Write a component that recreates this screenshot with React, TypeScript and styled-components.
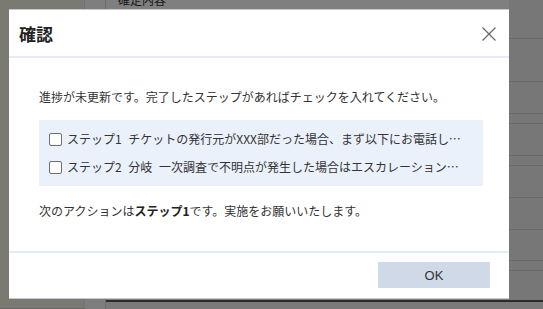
import React, { useState } from "react"
import styled, { createGlobalStyle } from "styled-components"

const GlobalStyle = createGlobalStyle`
  html, body {
    margin: 0;
    padding: 0;
    width: 543px;
    height: 309px;
    overflow: hidden;
    font-family: "Noto Sans CJK JP", "Noto Sans", sans-serif;
    color: #333;
  }
`;

// the page behind the modal
const Page = styled.div`
    position: relative;
    width: 543px;
    height: 309px;
    display: grid;
    grid-template-columns: 85px 21px 1fr 34px;
    grid-template-rows: 1fr 9px;
    background: #ffffff;
`;

const SideBar = styled.div`
    background: #f6f4e4;
    border-right: 1px solid #e2e2e2;
    border-bottom: 1px solid #cfcfcf;
    grid-row: 1 / 3;
`;

const Gutter = styled.div`
    background: #fdfdfd;
    border-right: 1px solid #d8d8d8;
    grid-row: 1 / 3;
`;

const Content = styled.div`
    padding: 0 12px;
    font-size: 12px;
    line-height: 1;
    color: #333;
    margin-top: -6px;
`;

const RightColumn = styled.div`
    background: #eeeeee;
    display: flex;
    flex-direction: column;
`;

const RightRow = styled.div<{ $h: number }>`
    height: ${(p) => p.$h}px;
    border-bottom: 1px solid #d2d2d2;
    flex-shrink: 0;
`;

const BottomBar = styled.div`
    grid-column: 3 / 5;
    background: #f4f4f4;
    border-top: 2px solid #555;
`;

const Overlay = styled.div`
    position: absolute;
    inset: 0;
    background: rgba(0, 0, 0, 0.5);
    padding: 10px 34px 11px 9px;
    box-sizing: border-box;
`;

const Dialog = styled.div`
    width: 500px;
    height: 288px;
    background: #fff;
    display: flex;
    flex-direction: column;
    box-shadow: 0 -1px 0 #c8c8c8, 0 1px 0 #c8c8c8;
`;

const Header = styled.div`
    height: 46px;
    display: flex;
    align-items: center;
    justify-content: space-between;
    padding: 0 12px 0 10px;
    border-bottom: 2px solid #e6ebf5;
`;

const Title = styled.h1`
    margin: 0;
    font-size: 17px;
    font-weight: 700;
    color: #222;
`;

const CloseButton = styled.button`
    border: none;
    background: transparent;
    padding: 0;
    width: 16px;
    height: 16px;
    display: flex;
    cursor: pointer;
    margin-top: 2px;
`;

const Body = styled.div`
    flex: 1;
    padding: 30px 26px 0 30px;
    font-size: 12px;
    line-height: 18px;
    color: #333;
`;

const Message = styled.p`
    margin: 0;
    white-space: nowrap;
`;

const StepList = styled.div`
    margin-top: 14px;
    background: #eaf1fb;
    padding: 10px 10px;
    display: flex;
    flex-direction: column;
    gap: 10px;
    width: 444px;
    box-sizing: border-box;
`;

const StepRow = styled.label`
    display: flex;
    align-items: center;
    gap: 5px;
    cursor: pointer;
    height: 18px;
`;

const Box = styled.span<{ $checked: boolean }>`
    width: 11px;
    height: 11px;
    border: 1px solid #6f6f6f;
    border-radius: 2px;
    background: ${(p) => (p.$checked ? "#4a78c2" : "#fff")};
    flex-shrink: 0;
`;

const StepText = styled.span`
    white-space: nowrap;
    overflow: hidden;
    text-overflow: ellipsis;
    word-spacing: 4px;
    width: 400px;
`;

const NextAction = styled.p`
    margin: 16px 0 0;
    white-space: nowrap;
    b {
        font-weight: 700;
        color: #222;
    }
`;

const Footer = styled.div`
    height: 47px;
    border-top: 2px solid #e6ebf5;
    display: flex;
    justify-content: flex-end;
    align-items: flex-start;
    padding: 9px 19px 0 0;
    box-sizing: border-box;
`;

const OkButton = styled.button`
    width: 112px;
    height: 26px;
    border: none;
    background: #d0d9e8;
    color: #333;
    font-family: "Liberation Sans", Arial, sans-serif;
    font-size: 13px;
    cursor: pointer;
`;

const steps = [
    "ステップ1 チケットの発行元がXXX部だった場合、まず以下にお電話してください",
    "ステップ2 分岐 一次調査で不明点が発生した場合はエスカレーションを行ってください",
];

const rightRows = [38, 42, 31, 9, 31, 9, 31, 31, 30, 9];

export default function App() {
    const [checked, setChecked] = useState<boolean[]>([false, false]);

    return (
        <>
            <GlobalStyle />
            <Page>
                <SideBar />
                <Gutter />
                <Content>確定内容</Content>
                <RightColumn>
                    {rightRows.map((h, i) => (
                        <RightRow key={i} $h={h} />
                    ))}
                </RightColumn>
                <BottomBar />
                <Overlay>
                    <Dialog>
                        <Header>
                            <Title>確認</Title>
                            <CloseButton aria-label="閉じる">
                                <svg width="16" height="16" viewBox="0 0 16 16">
                                    <path d="M1.5 1.5 L14.5 14.5 M14.5 1.5 L1.5 14.5" stroke="#666" strokeWidth="1.2" fill="none" />
                                </svg>
                            </CloseButton>
                        </Header>
                        <Body>
                            <Message>進捗が未更新です。完了したステップがあればチェックを入れてください。</Message>
                            <StepList>
                                {steps.map((s, i) => (
                                    <StepRow
                                        key={i}
                                        onClick={() => setChecked(checked.map((c, j) => (j === i ? !c : c)))}
                                    >
                                        <Box $checked={checked[i]} />
                                        <StepText>{s}</StepText>
                                    </StepRow>
                                ))}
                            </StepList>
                            <NextAction>
                                次のアクションは<b>ステップ1</b>です。実施をお願いいたします。
                            </NextAction>
                        </Body>
                        <Footer>
                            <OkButton>OK</OkButton>
                        </Footer>
                    </Dialog>
                </Overlay>
            </Page>
        </>
    )
}
